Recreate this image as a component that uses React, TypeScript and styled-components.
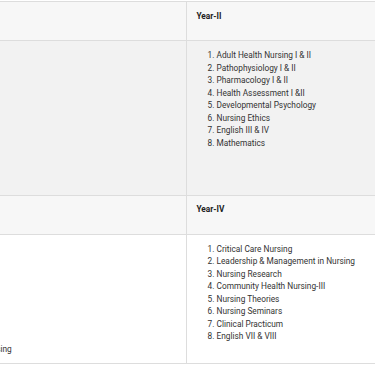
import styled, { createGlobalStyle } from "styled-components";

const GlobalStyle = createGlobalStyle`
  body {
    margin: 0;
    background: #ffffff;
    font-family: Roboto, "Liberation Sans", Arial, sans-serif;
  }
`;

const Viewport = styled.div`
  width: 375px;
  padding-top: 1px;
  overflow: hidden;
`;

const Table = styled.table`
  width: 720px;
  margin-left: -174px;
  border-collapse: collapse;
  table-layout: fixed;
  border-top: 1px solid #dddddd;
  border-bottom: 1px solid #dddddd;
`;

const Row = styled.tr<{ $bg: string }>`
  background: ${(props) => props.$bg};
`;

const HeadCell = styled.th`
  padding: 7.5px 10px 18px;
  border-bottom: 1px solid #dddddd;
  border-left: 1px solid #dddddd;
  text-align: left;
  vertical-align: top;
  font-size: 8.3px;
  line-height: 12.5px;
  font-weight: 700;
  color: #222222;
  &:first-child {
    border-left: 0;
  }
`;

const Cell = styled.td`
  padding: 8px 10px 8px;
  border-bottom: 1px solid #dddddd;
  border-left: 1px solid #dddddd;
  vertical-align: top;
  &:first-child {
    border-left: 0;
  }
`;

const Courses = styled.ol`
  margin: 0;
  padding-left: 20px;
  font-size: 8.3px;
  line-height: 12.5px;
  color: #333333;
`;

interface IYear {
  title: string;
  courses: string[];
}

const years: IYear[] = [
  {
    title: "Year-I",
    courses: [
      "Fundamentals of Nursing I & II",
      "Anatomy & Physiology I & II",
      "Microbiology",
      "Biochemistry for Nurses",
      "Applied Nutrition",
      "English I & II",
      "Computer Skills",
      "Islamiat",
      "Pakistan Studies",
      "Community Health Nursing-I",
      "Behavioral Psychology",
    ],
  },
  {
    title: "Year-II",
    courses: [
      "Adult Health Nursing I & II",
      "Pathophysiology I & II",
      "Pharmacology I & II",
      "Health Assessment I &II",
      "Developmental Psychology",
      "Nursing Ethics",
      "English III & IV",
      "Mathematics",
    ],
  },
  {
    title: "Year-III",
    courses: [
      "Pediatric Health Nursing",
      "Mental Health Nursing",
      "Community Health Nursing-II",
      "Epidemiology",
      "Biostatistics",
      "Culture, Health & Society",
      "English V & VI",
      "Teaching & Learning",
      "Introduction to Community Health Nursing",
    ],
  },
  {
    title: "Year-IV",
    courses: [
      "Critical Care Nursing",
      "Leadership & Management in Nursing",
      "Nursing Research",
      "Community Health Nursing-III",
      "Nursing Theories",
      "Nursing Seminars",
      "Clinical Practicum",
      "English VII & VIII",
    ],
  },
];

function App() {
  const pairs = [
    [years[0], years[1]],
    [years[2], years[3]],
  ];
  return (
    <Viewport>
      <GlobalStyle />
      <Table>
        <tbody>
          {pairs.map((pair, i) => [
            <Row key={`h${i}`} $bg="#f7f7f7">
              {pair.map((year) => (
                <HeadCell key={year.title}>{year.title}</HeadCell>
              ))}
            </Row>,
            <Row key={`b${i}`} $bg={i === 0 ? "#f2f2f2" : "#ffffff"}>
              {pair.map((year) => (
                <Cell key={year.title}>
                  <Courses>
                    {year.courses.map((course) => (
                      <li key={course}>{course}</li>
                    ))}
                  </Courses>
                </Cell>
              ))}
            </Row>,
          ])}
        </tbody>
      </Table>
    </Viewport>
  );
}

export default App;
